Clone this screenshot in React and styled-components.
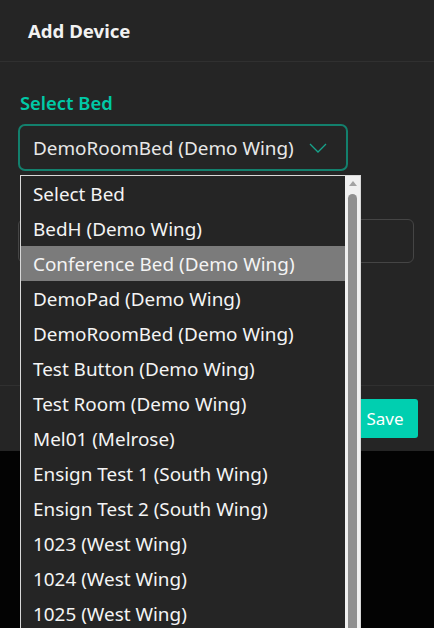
import React from 'react';
import styled, { createGlobalStyle } from 'styled-components';

const GlobalStyle = createGlobalStyle`
  html {
    overflow: hidden;
  }
  body {
    margin: 0;
    padding: 0;
    min-height: 100vh;
    background: #030303;
    font-family: "Noto Sans", "Open Sans", sans-serif;
  }
`;

const Modal = styled.div`
  position: relative;
  width: 434px;
  background: #252525;
  color: #ececec;
`;

const Header = styled.div`
  height: 62px;
  display: flex;
  align-items: center;
  padding-left: 28px;
  padding-bottom: 1px;
  box-sizing: border-box;
  border-bottom: 1px solid #303030;
  font-size: 18.6px;
  font-weight: 700;
  color: #f2f2f2;
`;

const Body = styled.div`
  padding: 28px 20px 0 18px;
  height: 323px;
  box-sizing: border-box;
`;

const Label = styled.div`
  color: #00c9a7;
  font-size: 18.4px;
  font-weight: 600;
  padding-left: 2px;
  margin-bottom: 9px;
`;

const SelectBox = styled.div`
  width: 330px;
  height: 47px;
  box-sizing: border-box;
  border: 2px solid #13806d;
  border-radius: 7px;
  display: flex;
  align-items: center;
  padding-left: 13px;
  gap: 15px;
  font-size: 18.9px;
  color: #e8e8e8;
`;

const Input = styled.div`
  margin-top: 48px;
  height: 44px;
  box-sizing: border-box;
  border: 1px solid #454545;
  border-radius: 6px;
`;

const Footer = styled.div`
  border-top: 1px solid #303030;
  height: 66px;
  box-sizing: border-box;
  display: flex;
  align-items: center;
  justify-content: flex-end;
  padding-right: 16px;
`;

const SaveButton = styled.button`
  height: 39px;
  width: 66px;
  border: none;
  border-radius: 3px;
  background: #00cfb0;
  color: #ffffff;
  font-family: inherit;
  font-size: 17px;
`;

const Dropdown = styled.div`
  position: absolute;
  left: 20px;
  top: 175px;
  width: 341px;
  height: 470px;
  box-sizing: border-box;
  border: 1px solid #d8d8d8;
  background: #252525;
  display: flex;
`;

const Options = styled.div`
  flex: 1;
  display: flex;
  flex-direction: column;
`;

const Option = styled.div`
  height: 35px;
  flex-shrink: 0;
  display: flex;
  align-items: center;
  padding-left: 12px;
  font-size: 18.9px;
  color: #f4f4f4;
  background: ${p => (p.$active ? '#7b7b7b' : 'transparent')};
`;

const Track = styled.div`
  width: 15px;
  background: #f0f0f0;
  display: flex;
  flex-direction: column;
  align-items: center;
`;

const Arrow = styled.div`
  margin-top: 5px;
  width: 0;
  height: 0;
  border-left: 4px solid transparent;
  border-right: 4px solid transparent;
  border-bottom: 5px solid #a3a3a3;
`;

const Thumb = styled.div`
  margin-top: 8px;
  width: 9px;
  flex: 1;
  background: #8f8f8f;
  border-radius: 5px 5px 0 0;
`;

const beds = [
  'Select Bed',
  'BedH (Demo Wing)',
  'Conference Bed (Demo Wing)',
  'DemoPad (Demo Wing)',
  'DemoRoomBed (Demo Wing)',
  'Test Button (Demo Wing)',
  'Test Room (Demo Wing)',
  'Mel01 (Melrose)',
  'Ensign Test 1 (South Wing)',
  'Ensign Test 2 (South Wing)',
  '1023 (West Wing)',
  '1024 (West Wing)',
  '1025 (West Wing)',
];

const Chevron = () => (
  <svg width="18" height="10" viewBox="0 0 18 10" fill="none">
    <path d="M1 1 L9 9 L17 1" stroke="#17a38b" strokeWidth="1.3" />
  </svg>
);

const App = () => (
  <>
    <GlobalStyle />
    <Modal>
      <Header>Add Device</Header>
      <Body>
        <Label>Select Bed</Label>
        <SelectBox>
          DemoRoomBed (Demo Wing)
          <Chevron />
        </SelectBox>
        <Input />
      </Body>
      <Footer>
        <SaveButton>Save</SaveButton>
      </Footer>
      <Dropdown>
        <Options>
          {beds.map(b => (
            <Option key={b} $active={b === 'Conference Bed (Demo Wing)'}>
              {b}
            </Option>
          ))}
        </Options>
        <Track>
          <Arrow />
          <Thumb />
        </Track>
      </Dropdown>
    </Modal>
  </>
);

export default App;
